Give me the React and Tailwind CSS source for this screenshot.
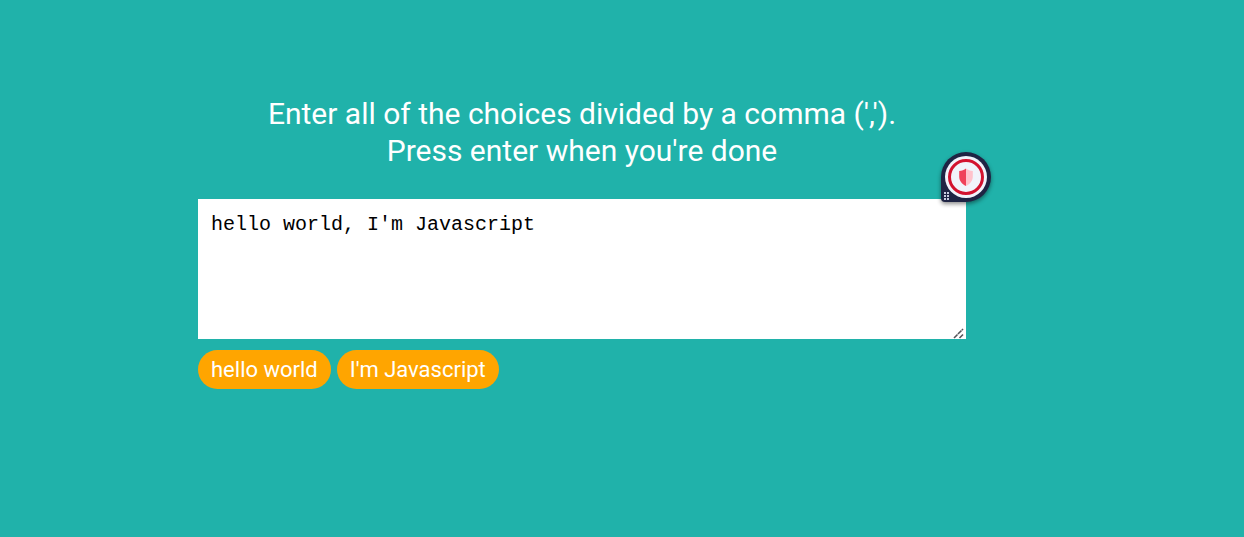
import { useState } from "react";

function ShieldBadge() {
  return (
    <button
      type="button"
      aria-label="Protection status"
      className="absolute -top-12 -right-[26px] size-[52px]"
    >
      <svg viewBox="0 0 52 52" className="size-full overflow-visible drop-shadow-[0_2px_2px_rgba(0,0,0,0.45)]" aria-hidden="true">
        <path d="M26 1a25 25 0 1 1 0 50H5a4 4 0 0 1-4-4V26A25 25 0 0 1 26 1Z" fill="#1f2444" />
        <circle cx="26" cy="26" r="21" fill="#f1f3fb" />
        <circle cx="26" cy="26" r="16.5" fill="none" stroke="#d3122f" strokeWidth="3" />
        <path d="M26 17.500v17.500c-4.200-2-6.800-5.500-6.800-9.500v-5.500C22 20 24 19 26 17.500Z" fill="#f0415a" />
        <path d="M26 17.500v17.500c4.200-2 6.800-5.500 6.800-9.500v-5.500C30 20 28 19 26 17.500Z" fill="#ffc2cc" />
        <g fill="#c9cbe0">
          <rect x="4" y="41" width="2" height="2" />
          <rect x="7" y="41" width="2" height="2" />
          <rect x="4" y="44" width="2" height="2" />
          <rect x="7" y="44" width="2" height="2" />
          <rect x="4" y="47" width="2" height="2" />
          <rect x="7" y="47" width="2" height="2" />
        </g>
      </svg>
    </button>
  );
}

function ResizeGrip() {
  return (
    <svg
      viewBox="0 0 12 12"
      className="pointer-events-none absolute right-px bottom-0 size-3"
      stroke="#55555a"
      strokeWidth="1.600"
      aria-hidden="true"
    >
      <path d="M1 11 10 2M6.500 11 10 7.500" strokeDasharray="5 0.600" />
    </svg>
  );
}

export default function App() {
  const [text, setText] = useState("hello world, I'm Javascript");
  const choices = text
    .split(",")
    .map((choice) => choice.trim())
    .filter(Boolean);

  return (
    <main className="flex min-h-screen items-center justify-center bg-[#20b2aa] pr-20 pb-[54px] font-['Roboto',sans-serif] text-white">
      <div className="w-full max-w-3xl">
        <label htmlFor="choices" className="block text-center text-[30px] leading-[37px]">
          Enter all of the choices divided by a comma (',').
          <br />
          Press enter when you're done
        </label>
        <div className="relative mt-[30px]">
          <textarea
            id="choices"
            value={text}
            spellCheck={false}
            onChange={(event) => setText(event.target.value)}
            className="block h-[140px] w-full resize-y bg-white px-[13px] py-3 font-['Liberation_Mono',monospace] text-[20px] leading-[28px] text-black outline-none [&::-webkit-resizer]:bg-white"
          />
          <ResizeGrip />
          <ShieldBadge />
        </div>
        <ul className="mt-[11px] flex flex-wrap gap-1.5">
          {choices.map((choice, index) => (
            <li key={index} className="rounded-full bg-[#ffa500] px-[13px] py-1.5 text-[22px] leading-[27px]">
              {choice}
            </li>
          ))}
        </ul>
      </div>
    </main>
  );
}
